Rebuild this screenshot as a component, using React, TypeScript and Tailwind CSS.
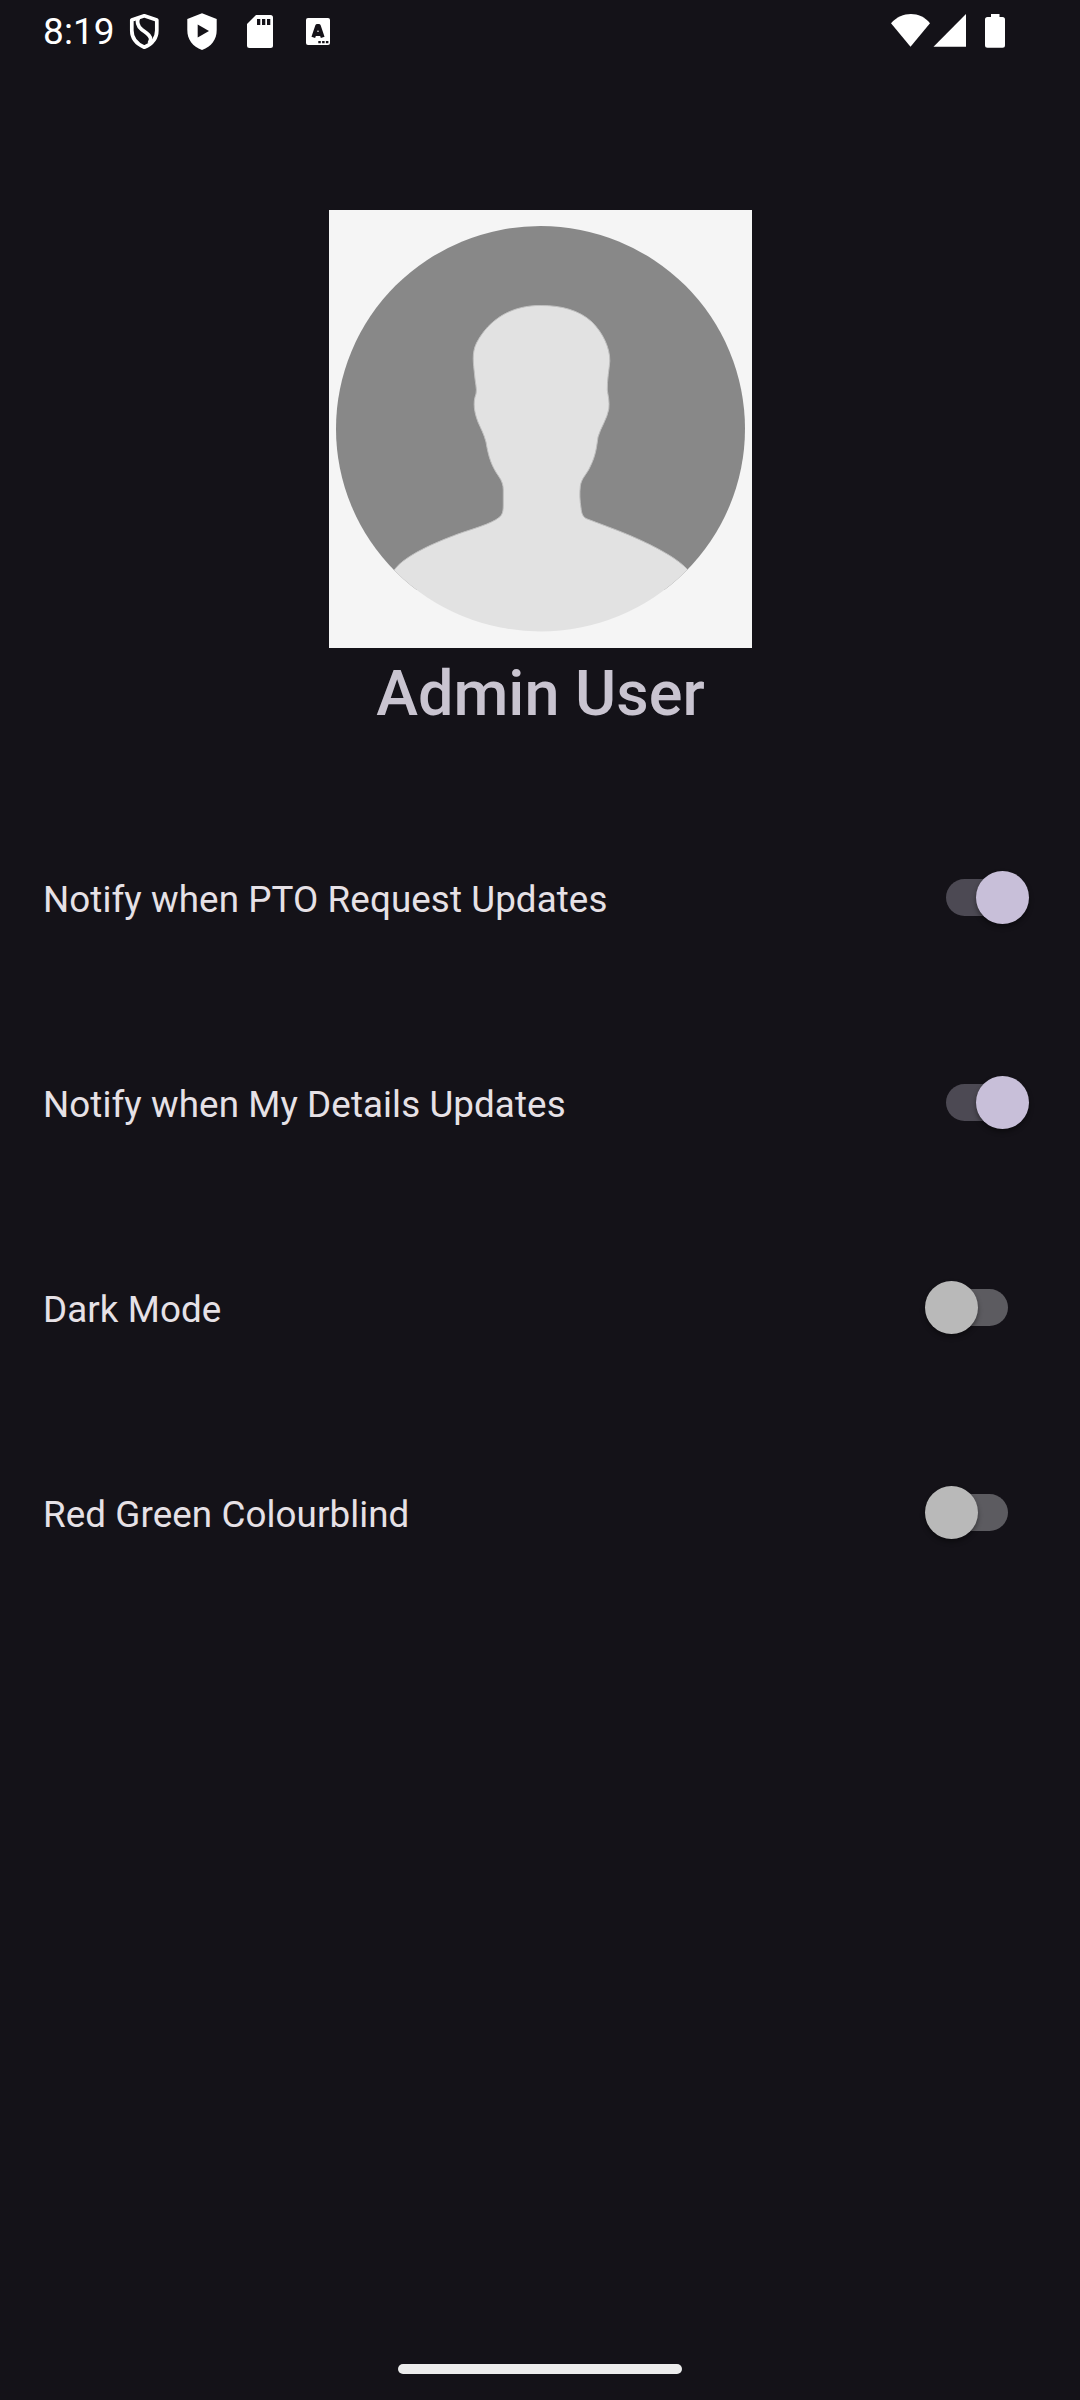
import React, { useState } from "react";

function StatusBar() {
  return (
    <header className="flex h-[63px] items-start justify-between pl-[43px] pr-[73px] text-white">
      <div className="flex items-start">
        <span className="w-[84px] whitespace-nowrap pt-[10px] text-[37px] leading-[43px] tracking-[0.1px]">8:19</span>
        <svg className="mt-[12px] h-[40px] w-[34px]" viewBox="0 0 34 40" fill="none" stroke="currentColor" strokeWidth="3.7" strokeLinejoin="round">
          <path d="M17.300 3.800L29.800 8V18.500C29.800 26.500 25 32 17.300 35.200C9.800 32 4.800 26.500 4.800 18.500V8Z" />
          <path d="M11.500 5.500C9.300 10.500 10.500 14 14.700 17.500C18.500 20.500 24.500 23.500 23.600 28L22.300 31.300" />
        </svg>
        <svg className="ml-[24px] mt-[12px] h-[40px] w-[34px]" viewBox="0 0 34 40">
          <path fill="currentColor" d="M17 1.300L31.700 7V18C31.700 27.500 26.500 34.500 17 38C7.500 34.500 2.300 27.500 2.300 18V7Z" />
          <path fill="#141218" d="M12.700 12.500V25.500L24 19Z" />
        </svg>
        <svg className="ml-[24px] mt-[12px] h-[40px] w-[34px]" viewBox="0 0 34 40">
          <path fill="currentColor" d="M13 3H27.500Q30 3 30 5.500V33.500Q30 36 27.500 36H6.500Q4 36 4 33.500V12Z" />
          <path fill="#141218" d="M14 7h3.300v6H14zM19 7h3.300v6H19zM24 7h3.300v6H24z" />
        </svg>
        <svg className="ml-[28px] mt-[12px] h-[40px] w-[34px]" viewBox="0 0 34 40">
          <rect x="1" y="6" width="24" height="27" rx="2" fill="currentColor" />
          <path d="M8.300 25.300L12.200 14H13.800L17.700 25.300M9.500 22H16.500" fill="none" stroke="#141218" strokeWidth="3.900" strokeLinejoin="round" />
          <path fill="#141218" d="M13.300 29h2.500v2.200h-2.500zM17.100 29h2.500v2.200h-2.500zM20.900 29h2.500v2.200h-2.500z" />
        </svg>
      </div>
      <div className="flex items-start">
        <svg className="mt-[12px] h-[36px] w-[42px]" viewBox="0 0 42 36">
          <path fill="currentColor" d="M1 11.200C12 -1 30 -1 40 11.200L20.500 34.700Z" />
        </svg>
        <svg className="mt-[12px] h-[36px] w-[36px]" viewBox="0 0 36 36">
          <path fill="currentColor" d="M1.500 34.800L34 2V34.800Z" />
        </svg>
        <svg className="ml-[17px] mt-[12px] h-[36px] w-[22px]" viewBox="0 0 22 36">
          <path fill="currentColor" d="M6 2H14.500V5H17.500Q20 5 20 7.500V33.300Q20 35.800 17.500 35.800H2.500Q0 35.800 0 33.300V7.500Q0 5 2.500 5H6Z" />
        </svg>
      </div>
    </header>
  );
}

function Avatar() {
  return (
    <svg className="h-[438px] w-[423px] bg-[#f5f5f5]" viewBox="329 210 423 438" aria-label="Profile picture">
      <defs>
        <clipPath id="portrait">
          <ellipse cx="540.500" cy="428.700" rx="204.500" ry="202.700" />
        </clipPath>
      </defs>
      <g clipPath="url(#portrait)">
        <path fill="#888888" d="M329 210H752V590H329Z" />
        <path
          fill="#e2e2e2"
          stroke="#c0c0c0"
          strokeWidth="1"
          d="M541.500 305.500C512 305 489 319 476.500 343C471.500 353 473.500 364 474.500 374C475 382 477.300 389 476 394C472.500 403 474.500 413 478 422C480.500 428 484 434 486 442C488.500 457 491.500 466 498.500 476C502 481 503.300 485 503.300 490V505C503.300 511 502.500 515 499 517.500C491 524 472 529 458 534C434 543 406 555 395 569L370 600V650H720V600L687 569C676 557 650 544 630 535.500C615 529 600 524 586 518.500C582 516 581.500 512 581 508C579.800 500 579.500 494 580.300 486C581.500 478 587 474 590 467C596 455 596.500 447 598 437C601 427 607 419 608.800 409C609.700 401 608 396 607.300 390C607 380 609.300 369 609.800 361C610 348 603 333 592 322C579 310 561 305.500 541.500 305.500Z"
        />
      </g>
    </svg>
  );
}

function SettingRow({ label, initial }: { label: string; initial: boolean }) {
  const [on, setOn] = useState(initial);
  return (
    <div className="flex h-[205px] items-center justify-between pl-[43px] pr-[72px]">
      <span className="whitespace-nowrap pt-[3px] text-[36.75px] leading-[43px] tracking-[0.09px] text-[#e6e1e6]">{label}</span>
      <button
        type="button"
        role="switch"
        aria-checked={on}
        aria-label={label}
        onClick={() => setOn(!on)}
        className={`relative h-[37px] w-[62px] rounded-full ${on ? "bg-[#4c4953]" : "bg-[#5c5b60]"}`}
      >
        <span
          className={`absolute top-[-8px] size-[53px] rounded-full shadow-[0_3px_5px_rgba(0,0,0,0.4)] ${
            on ? "left-[30px] bg-[#c8bfd9]" : "left-[-21px] bg-[#b9b9b9]"
          }`}
        />
      </button>
    </div>
  );
}

export default function App() {
  return (
    <div className="flex h-[2400px] w-[1080px] flex-col overflow-hidden bg-[#141218] font-['Roboto',sans-serif]">
      <StatusBar />
      <main className="flex flex-1 flex-col pt-[147px]">
        <div className="flex h-[585px] flex-col items-center">
          <Avatar />
          <h1 className="mt-[9px] pl-[1px] text-[63px] font-medium leading-[74px] text-[#c9c4d0]">Admin User</h1>
        </div>
        <SettingRow label="Notify when PTO Request Updates" initial={true} />
        <SettingRow label="Notify when My Details Updates" initial={true} />
        <SettingRow label="Dark Mode" initial={false} />
        <SettingRow label="Red Green Colourblind" initial={false} />
      </main>
      <footer className="flex h-[36px] justify-center">
        <div className="h-[10px] w-[284px] rounded-full bg-[#ececec]" />
      </footer>
    </div>
  );
}
